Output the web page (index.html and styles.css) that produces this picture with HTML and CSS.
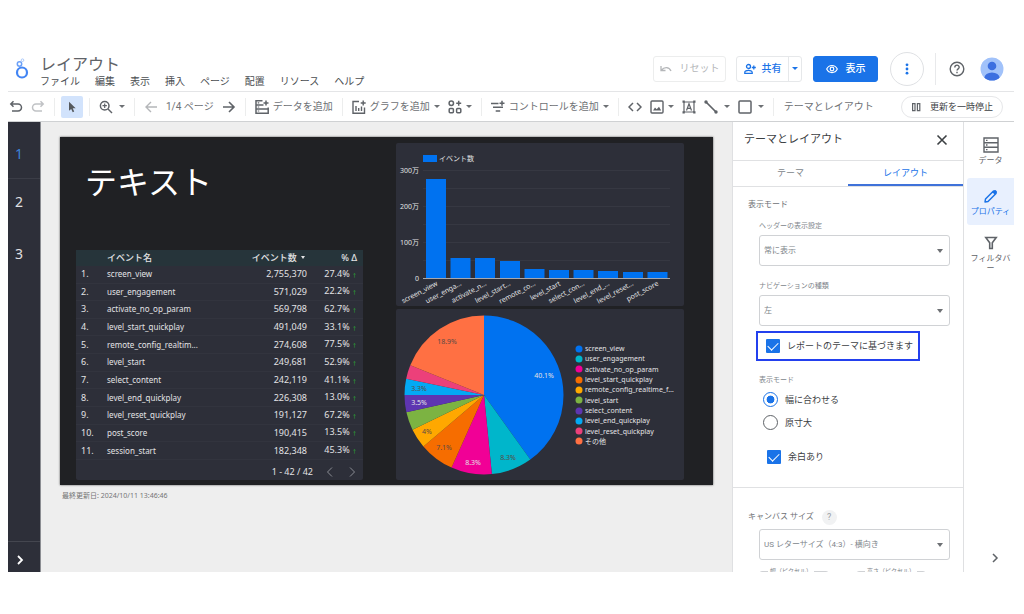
FILE: index.html
```html
<!DOCTYPE html>
<html lang="ja">
<head>
<meta charset="utf-8">
<title>レイアウト</title>
<link rel="stylesheet" href="styles.css">
</head>
<body>
<div class="app">
  <header class="header">
    <svg class="logo" viewBox="0 0 14 22"><circle cx="7" cy="14.500" r="5" fill="none" stroke="#4285f4" stroke-width="2.200"/><circle cx="4.500" cy="6" r="2.200" fill="none" stroke="#6ba0f7" stroke-width="1.500"/><circle cx="7.500" cy="2.200" r="1.300" fill="none" stroke="#a9c8fa"/></svg>
    <div class="heading">
      <h1 class="title">レイアウト</h1>
      <nav class="menu">
        <button>ファイル</button><button>編集</button><button>表示</button><button>挿入</button><button>ページ</button><button>配置</button><button>リソース</button><button>ヘルプ</button>
      </nav>
    </div>
    <div class="actions">
      <button class="btn btn-reset" disabled><svg class="ic12" viewBox="0 0 12 12"><path d="M1 3v4.500h4.500M1.500 7C4 4 9 3.500 11 8" fill="none" stroke="currentColor" stroke-width="1.300"/></svg>リセット</button>
      <div class="split">
        <button class="btn-share"><svg class="ic12" viewBox="0 0 12 12" fill="none" stroke="currentColor" stroke-width="1.300"><circle cx="4.500" cy="3.500" r="2"/><path d="M.8 10.300V9.500C.8 8 3 7.300 4.500 7.300S8.200 8 8.200 9.500v.8zM9.800 2.500v4M7.800 4.500h4"/></svg>共有</button>
        <button class="btn-more" aria-label="共有メニュー"><span class="caret"></span></button>
      </div>
      <button class="btn btn-view"><svg class="ic12" viewBox="0 0 12 12" fill="none" stroke="currentColor" stroke-width="1.200"><path d="M.7 6C3 1.300 9 1.300 11.300 6 9 10.700 3 10.700.7 6z"/><circle cx="6" cy="6" r="1.800"/></svg>表示</button>
      <button class="btn-round" aria-label="その他"><svg class="ic12" viewBox="0 0 12 12" fill="#1a73e8"><circle cx="6" cy="1.800" r="1.400"/><circle cx="6" cy="6" r="1.400"/><circle cx="6" cy="10.200" r="1.400"/></svg></button>
      <span class="rule"></span>
      <button class="btn-help" aria-label="ヘルプ"><svg viewBox="0 0 16 16" fill="none" stroke="#5f6368" stroke-width="1.400"><circle cx="8" cy="8" r="6.800"/><path d="M5.800 6.400c0-3 4.400-2.900 4.400-.2 0 1.600-2.200 1.700-2.200 3.400M8 10.700v1.500"/></svg></button>
      <button class="btn-avatar" aria-label="アカウント"><svg viewBox="0 0 24 24"><defs><clipPath id="face"><circle cx="12" cy="12" r="11.500"/></clipPath></defs><g clip-path="url(#face)"><circle cx="12" cy="12" r="12" fill="#a1c2fa"/><circle cx="12" cy="9" r="4.300" fill="#3c6fe0"/><ellipse cx="12" cy="21" rx="7.600" ry="5.600" fill="#3c6fe0"/></g></svg></button>
    </div>
  </header>

  <div class="toolbar">
    <div class="group group-first">
      <button aria-label="元に戻す"><svg class="ic" viewBox="0 0 14 14"><path d="M4.500 1.300 1.800 4l2.700 2.700M2 4h7a3.500 3.500 0 0 1 0 7H3" fill="none" stroke="#5f6368" stroke-width="1.500"/></svg></button>
      <button aria-label="やり直す"><svg class="ic" viewBox="0 0 14 14"><path d="M9.500 1.300 12.200 4 9.500 6.700M12 4H5a3.500 3.500 0 0 0 0 7h6" fill="none" stroke="#c0c2c5" stroke-width="1.500"/></svg></button>
    </div>
    <div class="group group-tight">
      <button class="pointer" aria-label="選択"><svg class="ic" viewBox="0 0 14 14"><path d="M4 1.800v9l2.200-1.900 1.500 3.300 1.500-.7-1.500-3.200h3z" fill="#55595e"/></svg></button>
    </div>
    <div class="group">
      <button class="wide" aria-label="ズーム"><svg class="ic" viewBox="0 0 14 14" fill="none" stroke="#5f6368" stroke-width="1.500"><circle cx="5.700" cy="5.700" r="4.300"/><path d="m9 9 4 4"/><path d="M5.700 3.500v4.400M3.500 5.700h4.400" stroke-width="1.200"/></svg><span class="caret"></span></button>
    </div>
    <div class="group">
      <button aria-label="前のページ"><svg class="ic" viewBox="0 0 14 14"><path d="M13 7H2M7 2 2 7l5 5" fill="none" stroke="#b4b6b9" stroke-width="1.400"/></svg></button>
      <span>1/4 ページ</span>
      <button aria-label="次のページ"><svg class="ic" viewBox="0 0 14 14"><path d="M1 7h11M7 2l5 5-5 5" fill="none" stroke="#5f6368" stroke-width="1.600"/></svg></button>
    </div>
    <div class="group">
      <button><svg class="ic" viewBox="0 0 14 14" fill="none" stroke="#5f6368" stroke-width="1.500"><path d="M7.500.8H1v12.400h12.200V9H1M1 5h7.500M13.200 9V7.500M11 .5v5M8.500 3h5"/><path d="M3.500 2.300v1.200M3.500 6.500v1M3.500 10.500v1"/></svg>データを追加</button>
    </div>
    <div class="group">
      <button><svg class="ic" viewBox="0 0 14 14" fill="none" stroke="#5f6368" stroke-width="1.400"><path d="M7 1.500H1v11.700h11.500V7.500M11.200.5v5M8.700 3h5M4 11V6M6.700 11V8M9.500 11V6.500"/></svg>グラフを追加<span class="caret"></span></button>
      <button aria-label="コミュニティ ビジュアリゼーション"><svg class="ic" viewBox="0 0 14 14" fill="none" stroke="#5f6368" stroke-width="1.500"><circle cx="3.300" cy="3.300" r="2.200"/><rect x="1.200" y="8.600" width="4.200" height="4.200" rx="1"/><rect x="8.600" y="8.600" width="4.200" height="4.200" rx="1"/><path d="M10.700.8v5M8.200 3.300h5"/></svg><span class="caret"></span></button>
    </div>
    <div class="group">
      <button><svg class="ic" viewBox="0 0 14 14" fill="none" stroke="#5f6368" stroke-width="1.500"><path d="M0 3.500h7.500M2 7.200h10M4.700 11h4.500M11 .8v5M8.500 3.300h5"/></svg>コントロールを追加<span class="caret"></span></button>
    </div>
    <div class="group">
      <button aria-label="URL の埋め込み"><svg class="ic" viewBox="0 0 14 14"><path d="M5 3 1 7l4 4M9 3l4 4-4 4" fill="none" stroke="#5f6368" stroke-width="1.500"/></svg></button>
      <button aria-label="画像"><svg class="ic" viewBox="0 0 14 14"><rect x="1" y="1" width="12" height="12" rx="1" fill="none" stroke="#5f6368" stroke-width="1.400"/><path d="m3 10.500 2-3 1.700 1.800L9 6.800l2.200 3.700z" fill="#5f6368"/></svg><span class="caret"></span></button>
      <button aria-label="テキスト"><svg class="ic" viewBox="0 0 14 14" fill="none" stroke="#5f6368" stroke-width="1.200"><path d="M2 2h10v10H2z"/><path d="M4.500 10.500 7 3.800l2.500 6.700M5.400 8.300h3.200"/><path d="M.5.5h2.300v2.300H.5zM11.200.5h2.300v2.300h-2.300zM.5 11.200h2.300v2.300H.5zM11.200 11.200h2.300v2.300h-2.300z" fill="#5f6368" stroke="none"/></svg></button>
      <button class="wide" aria-label="線"><svg class="ic" viewBox="0 0 14 14"><path d="m2 2 10 10" stroke="#5f6368" stroke-width="1.700"/><circle cx="2" cy="2" r="1.700" fill="#5f6368"/><circle cx="12" cy="12" r="1.700" fill="#5f6368"/></svg><span class="caret"></span></button>
      <button class="wide" aria-label="図形"><svg class="ic" viewBox="0 0 14 14"><rect x="1" y="1" width="12" height="12" rx="1" fill="none" stroke="#5f6368" stroke-width="1.500"/></svg><span class="caret"></span></button>
    </div>
    <div class="group group-last"><button>テーマとレイアウト</button></div>
    <button class="pause"><svg class="ic12" viewBox="0 0 12 12" fill="none" stroke="#5f6368" stroke-width="1.200"><path d="M2.600 2.600h2.400v7H2.600zM7.400 2.600h2.400v7H7.400z"/></svg>更新を一時停止</button>
  </div>

  <main class="main">
    <nav class="pages">
      <button class="page page-on">1</button>
      <button class="page">2</button>
      <button class="page">3</button>
      <button class="expand" aria-label="展開"><svg viewBox="0 0 10 10"><path d="m3 1 4 4-4 4" fill="none" stroke="#fff" stroke-width="1.800"/></svg></button>
    </nav>

    <section class="stage">
      <div class="canvas">
        <div class="left">
          <h2 class="text">テキスト</h2>
          <div class="card table-card">
            <table>
              <thead><tr><th class="n"></th><th class="name">イベント名</th><th class="num">イベント数 <span class="sort"></span></th><th class="pct">% Δ</th></tr></thead>
              <tbody>
                <tr><td>1.</td><td class="name">screen_view</td><td class="num">2,755,370</td><td class="pct">27.4% <i>↑</i></td></tr>
                <tr><td>2.</td><td class="name">user_engagement</td><td class="num">571,029</td><td class="pct">22.2% <i>↑</i></td></tr>
                <tr><td>3.</td><td class="name">activate_no_op_param</td><td class="num">569,798</td><td class="pct">62.7% <i>↑</i></td></tr>
                <tr><td>4.</td><td class="name">level_start_quickplay</td><td class="num">491,049</td><td class="pct">33.1% <i>↑</i></td></tr>
                <tr><td>5.</td><td class="name">remote_config_realtim...</td><td class="num">274,608</td><td class="pct">77.5% <i>↑</i></td></tr>
                <tr><td>6.</td><td class="name">level_start</td><td class="num">249,681</td><td class="pct">52.9% <i>↑</i></td></tr>
                <tr><td>7.</td><td class="name">select_content</td><td class="num">242,119</td><td class="pct">41.1% <i>↑</i></td></tr>
                <tr><td>8.</td><td class="name">level_end_quickplay</td><td class="num">226,308</td><td class="pct">13.0% <i>↑</i></td></tr>
                <tr><td>9.</td><td class="name">level_reset_quickplay</td><td class="num">191,127</td><td class="pct">67.2% <i>↑</i></td></tr>
                <tr><td>10.</td><td class="name">post_score</td><td class="num">190,415</td><td class="pct">13.5% <i>↑</i></td></tr>
                <tr><td>11.</td><td class="name">session_start</td><td class="num">182,348</td><td class="pct">45.3% <i>↑</i></td></tr>
              </tbody>
            </table>
            <div class="pager"><span>1 - 42 / 42</span>
              <button aria-label="前へ"><svg viewBox="0 0 10 10"><path d="M7 .5 2.500 5 7 9.500" fill="none" stroke="#8b8d94"/></svg></button>
              <button aria-label="次へ"><svg viewBox="0 0 10 10"><path d="M3 .5 7.500 5 3 9.500" fill="none" stroke="#8b8d94"/></svg></button>
            </div>
          </div>
        </div>
        <div class="right">
          <svg class="card chart" viewBox="0 0 288 163">
            <rect x="27" y="12" width="14" height="7" fill="#0072f0"/>
            <text x="43" y="18">イベント数</text>
            <path d="M27 27.500h247M27 45.500h247M27 63.500h247M27 81.500h247M27 99.500h247M27 117.500h247" stroke="#363842"/>
            <g class="end"><text x="23" y="30">300万</text><text x="23" y="66">200万</text><text x="23" y="102">100万</text><text x="23" y="138">0</text></g>
            <g fill="#0072f0">
              <rect x="30" y="36" width="20" height="99"/><rect x="54.500" y="115" width="20" height="20"/><rect x="79" y="115" width="20" height="20"/><rect x="104" y="118" width="20" height="17"/><rect x="128.500" y="126" width="20" height="9"/><rect x="153" y="127" width="20" height="8"/><rect x="177.500" y="127" width="20" height="8"/><rect x="202" y="128" width="20" height="7"/><rect x="227" y="129" width="20" height="6"/><rect x="251.500" y="129" width="20" height="6"/>
            </g>
            <path d="M27 135.500h247" stroke="#a6a7ad"/>
            <g class="end">
              <text transform="translate(42 142) rotate(-28)">screen_view</text>
              <text transform="translate(66 142) rotate(-28)">user_enga…</text>
              <text transform="translate(91 142) rotate(-28)">activate_n…</text>
              <text transform="translate(115 142) rotate(-28)">level_start…</text>
              <text transform="translate(140 142) rotate(-28)">remote_co…</text>
              <text transform="translate(165 142) rotate(-28)">level_start</text>
              <text transform="translate(189 142) rotate(-28)">select_con…</text>
              <text transform="translate(214 142) rotate(-28)">level_end_…</text>
              <text transform="translate(238 142) rotate(-28)">level_reset…</text>
              <text transform="translate(263 142) rotate(-28)">post_score</text>
            </g>
          </svg>
          <svg class="card chart" viewBox="0 0 288 171">
            <g transform="translate(88 86) rotate(-90)" fill="none" stroke-width="79.500">
              <circle r="39.750" pathLength="100" stroke="#0072f0" stroke-dasharray="40.100 100"/>
              <circle r="39.750" pathLength="100" stroke="#00b6cb" stroke-dasharray="8.300 100" stroke-dashoffset="-40.100"/>
              <circle r="39.750" pathLength="100" stroke="#f10096" stroke-dasharray="8.300 100" stroke-dashoffset="-48.400"/>
              <circle r="39.750" pathLength="100" stroke="#f66d00" stroke-dasharray="7.100 100" stroke-dashoffset="-56.700"/>
              <circle r="39.750" pathLength="100" stroke="#ffa800" stroke-dasharray="4 100" stroke-dashoffset="-63.800"/>
              <circle r="39.750" pathLength="100" stroke="#7cb342" stroke-dasharray="3.700 100" stroke-dashoffset="-67.800"/>
              <circle r="39.750" pathLength="100" stroke="#5e35b1" stroke-dasharray="3.500 100" stroke-dashoffset="-71.500"/>
              <circle r="39.750" pathLength="100" stroke="#03a9f4" stroke-dasharray="3.300 100" stroke-dashoffset="-75"/>
              <circle r="39.750" pathLength="100" stroke="#ec407a" stroke-dasharray="2.800 100" stroke-dashoffset="-78.300"/>
              <circle r="39.750" pathLength="100" stroke="#ff7043" stroke-dasharray="18.900 100" stroke-dashoffset="-81.100"/>
            </g>
            <g class="mid">
              <text x="148" y="69">40.1%</text><text class="dim" x="112" y="151">8.3%</text><text x="77" y="156">8.3%</text><text class="dim" x="48" y="141">7.1%</text><text class="dim" x="31" y="125">4%</text><text x="23" y="96">3.5%</text><text class="dim" x="23" y="82">3.3%</text><text class="dim" x="51" y="35">18.9%</text>
            </g>
            <circle cx="183" cy="40" r="3.500" fill="#0072f0"/><text x="189" y="42">screen_view</text>
            <circle cx="183" cy="50" r="3.500" fill="#00b6cb"/><text x="189" y="52">user_engagement</text>
            <circle cx="183" cy="60" r="3.500" fill="#f10096"/><text x="189" y="63">activate_no_op_param</text>
            <circle cx="183" cy="71" r="3.500" fill="#f66d00"/><text x="189" y="73">level_start_quickplay</text>
            <circle cx="183" cy="81" r="3.500" fill="#ffa800"/><text x="189" y="83">remote_config_realtime_f…</text>
            <circle cx="183" cy="91" r="3.500" fill="#7cb342"/><text x="189" y="94">level_start</text>
            <circle cx="183" cy="102" r="3.500" fill="#5e35b1"/><text x="189" y="104">select_content</text>
            <circle cx="183" cy="112" r="3.500" fill="#03a9f4"/><text x="189" y="114">level_end_quickplay</text>
            <circle cx="183" cy="122" r="3.500" fill="#ec407a"/><text x="189" y="125">level_reset_quickplay</text>
            <circle cx="183" cy="132" r="3.500" fill="#ff7043"/><text x="189" y="135">その他</text>
          </svg>
        </div>
      </div>
      <p class="updated">最終更新日: 2024/10/11 13:46:46</p>
    </section>

    <aside class="panel">
      <div class="panel-head"><h2>テーマとレイアウト</h2><button aria-label="閉じる"><svg viewBox="0 0 12 12"><path d="m1.500 1.500 9 9M10.500 1.500l-9 9" stroke="#3c4043" stroke-width="1.600"/></svg></button></div>
      <div class="tabs"><button class="tab">テーマ</button><button class="tab tab-on">レイアウト</button></div>
      <div class="view-mode">
        <h3>表示モード</h3>
        <div class="fields">
          <label for="head">ヘッダーの表示設定</label>
          <span class="select"><select id="head"><option>常に表示</option></select></span>
          <label for="navtype" class="next">ナビゲーションの種類</label>
          <span class="select"><select id="navtype"><option>左</option></select></span>
          <label class="check marked"><input type="checkbox" checked>レポートのテーマに基づきます</label>
          <span class="sub" id="fit">表示モード</span>
          <div role="radiogroup" aria-labelledby="fit" class="radios">
            <label class="radio"><input type="radio" name="fit" checked>幅に合わせる</label>
            <label class="radio"><input type="radio" name="fit">原寸大</label>
          </div>
          <label class="check"><input type="checkbox" checked>余白あり</label>
        </div>
      </div>
      <div class="canvas-size">
        <div class="size-head"><h3>キャンバス サイズ</h3><button class="hint" aria-label="キャンバス サイズのヘルプ">?</button></div>
        <div class="fields">
          <span class="select"><select aria-label="キャンバス サイズ"><option>US レターサイズ（4:3）- 横向き</option></select></span>
          <div class="dims"><fieldset><legend>幅（ピクセル）</legend></fieldset><fieldset><legend>高さ（ピクセル）</legend></fieldset></div>
        </div>
      </div>
    </aside>

    <nav class="rail">
      <button class="rail-item"><svg viewBox="0 0 16 16" fill="none" stroke="currentColor" stroke-width="1.400"><path d="M1 1h14v14H1zM1 5.700h14M1 10.300h14"/><path d="M3 3.400h1.500M3 8h1.500M3 12.600h1.500"/></svg>データ</button>
      <button class="rail-item rail-on"><svg viewBox="0 0 16 16"><path d="m2 14 .5-3 8-8 2.500 2.500-8 8z" fill="none" stroke="currentColor" stroke-width="1.500" stroke-linejoin="round"/><path d="m9.300 4.200 2-2c1-1 3.500 1.500 2.500 2.500l-2 2z" fill="currentColor"/></svg>プロパティ</button>
      <button class="rail-item rail-filter"><svg viewBox="0 0 16 16"><path d="M2.800 2.500h10.400L9.300 7.800v5.700H6.700V7.800z" fill="none" stroke="currentColor" stroke-width="1.600"/></svg>フィルタバー</button>
      <button class="collapse" aria-label="折りたたむ"><svg viewBox="0 0 10 10"><path d="m3 1 4 4-4 4" fill="none" stroke="#5f6368" stroke-width="1.500"/></svg></button>
    </nav>
  </main>
</div>
</body>
</html>
```

FILE: styles.css
```css
* { box-sizing: border-box; }
body { margin: 0; background: #fff; color: #5f6368; font-family: Roboto, "Noto Sans CJK JP", sans-serif; font-size: 10px; line-height: 14px; }
h1, h2, h3, p { margin: 0; font-weight: 400; }
button { display: flex; align-items: center; justify-content: center; margin: 0; padding: 0; border: 0; background: none; color: inherit; font: inherit; white-space: nowrap; }
svg { display: block; flex: none; }
.ic { width: 14px; height: 14px; }
.ic12 { width: 12px; height: 12px; }
.caret { flex: none; border: 3px solid transparent; border-top-color: currentColor; border-bottom: 0; }

.app { display: flex; flex-direction: column; height: 100vh; padding: 46px 10px 42px 8px; }

.header { display: flex; align-items: center; flex: none; height: 46px; padding: 0 10px 0 7px; border-bottom: 1px solid #e4e5e7; }
.logo { width: 14px; height: 22px; }
.heading { margin-left: 11px; padding-top: 6px; }
.title { font-size: 16px; line-height: 20px; color: #5f6368; }
.menu { display: flex; gap: 15px; color: #4a4d51; line-height: 14px; }
.actions { display: flex; align-items: center; margin-left: auto; }
.btn { height: 26px; gap: 8px; border: 1px solid #eceded; border-radius: 3px; }
.btn-reset { width: 73px; color: #b4b6b9; }
.split { display: flex; height: 26px; margin: 0 11px 0 10px; border: 1px solid #e6e8ea; border-radius: 3px; color: #1a73e8; }
.btn-share { width: 51px; gap: 6px; font-weight: 500; }
.btn-more { width: 13px; border-left: 1px solid #e6e8ea; }
.btn-view { width: 65px; border-color: #1a73e8; background: #1a73e8; color: #fff; font-weight: 500; }
.btn-round { width: 34px; height: 34px; margin: 0 11px 0 12px; border: 1px solid #dfe1e4; border-radius: 50%; }
.rule { height: 32px; border-left: 1px solid #e8e9eb; }
.btn-help { margin: 0 15px 0 13px; }
.btn-help svg { width: 16px; height: 16px; }
.btn-avatar svg { width: 24px; height: 24px; }

.toolbar { display: flex; align-items: center; flex: none; height: 30px; padding-right: 11px; border-bottom: 1px solid #cfd1d3; white-space: nowrap; color: #6d7074; }
.group { display: flex; align-items: center; gap: 8px; height: 18px; padding: 0 9px; border-right: 1px solid #eceded; }
.group button { gap: 4px; }
.group .wide { gap: 6px; }
.group-first { padding-left: 1px; }
.group-tight { padding: 0 6px; }
.group-last { border: 0; padding-left: 10px; }
.group .pointer { width: 22px; height: 22px; border-radius: 2px; background: #d2e3fc; }
.pause { margin-left: auto; height: 22px; padding: 0 9px 0 8px; gap: 8px; border: 1px solid #e6e7e9; border-radius: 11px; color: #3c4043; font-size: 9px; }

.main { display: flex; flex: 1; min-height: 0; }
.pages { display: flex; flex-direction: column; flex: none; width: 33px; padding-top: 8px; background: #2d2f39; border-right: 1px solid #8c8e93; color: #e0e0e3; font: 14px/20px "Noto Sans", sans-serif; }
.page { height: 52px; padding: 0 10px 6px 0; }
.page-on { height: 49px; padding-bottom: 0; border-bottom: 1px solid #3b3d47; color: #3d85d8; }
.expand { height: 31px; margin-top: auto; padding: 6px 9px 0 0; border-top: 1px solid #44464f; }
.expand svg, .collapse svg { width: 10px; height: 10px; }

.stage { flex: 1; min-width: 0; padding: 15px 19px 0; background: #eee; }
.canvas { display: grid; grid-template-columns: 287fr 288fr; column-gap: 33px; padding: 6px 29px 5px 16px; background: #202124; box-shadow: 0 0 2px #555; font-family: "Noto Sans", "Noto Sans CJK JP", sans-serif; color: #e3e3e5; }
.left, .right { display: flex; flex-direction: column; min-width: 0; }
.left { justify-content: space-between; }
.right { gap: 3px; }
.text { padding: 16px 0 0 9px; font-size: 32px; line-height: 46px; font-weight: 400; color: #fff; }
.card { background: #2d2f39; border-radius: 2px; }
.table-card { font-size: 9px; line-height: 12px; }
table { width: 100%; height: 210px; border-collapse: collapse; table-layout: fixed; }
th, td { padding: 0; text-align: left; font-weight: 400; white-space: nowrap; }
td { border-bottom: 1px solid #32343e; }
td.name { font-size: 8px; }
th { height: 16px; background: #26343a; font-weight: 500; }
th:first-child, td:first-child { width: 31px; padding-left: 5px; }
th.num, td.num { width: 68px; text-align: right; }
th.num { padding-right: 2px; }
th.pct, td.pct { width: 56px; padding-right: 6px; text-align: right; }
.pct i { color: #2c9a35; font-style: normal; font-weight: 700; font-size: 5px; }
.sort { display: inline-block; margin: 0 0 2px 2px; border: 2px solid transparent; border-top: 3px solid #e3e3e5; border-bottom: 0; }
.pager { display: flex; align-items: center; justify-content: flex-end; gap: 12px; height: 20px; padding: 4px 6px 0 0; }
.pager svg { width: 10px; height: 10px; }
.chart { width: 100%; height: auto; overflow: visible; font-size: 7px; }
.chart text { fill: #e3e3e5; }
.chart .end { text-anchor: end; }
.chart .mid { text-anchor: middle; }
.chart .dim { fill: #5a4a45; }
.updated { padding: 4px 2px; font: 7px/14px "Noto Sans", "Noto Sans CJK JP", sans-serif; color: #757575; }

.panel { flex: none; width: 232px; overflow: hidden; border: solid #dfe0e2; border-width: 0 1px; background: #fff; }
.panel-head { display: flex; align-items: center; justify-content: space-between; height: 39px; padding: 0 15px 2px 11px; border-bottom: 1px solid #e0e1e3; }
.panel-head h2 { font-size: 11px; color: #3c4043; }
.panel-head svg { width: 12px; height: 12px; }
.tabs { display: flex; height: 26px; border-bottom: 1px solid #e0e1e3; }
.tab { flex: 1; padding-bottom: 2px; font-size: 9px; color: #80868b; }
.tab-on { color: #1a73e8; box-shadow: inset 0 -2px #3f72d9; }
.view-mode { padding: 11px 13px 0 15px; height: 301px; border-bottom: 1px solid #e0e1e3; }
h3 { font-size: 8px; line-height: 14px; color: #6d7074; }
.fields { display: flex; flex-direction: column; align-items: flex-start; padding-left: 11px; font-size: 7px; line-height: 12px; color: #80868b; }
.view-mode .fields { padding-top: 8px; }
.select { display: flex; align-items: center; width: 100%; margin-top: 3px; position: relative; }
.select::after { content: ""; position: absolute; right: 7px; border: 3px solid transparent; border-top: 4px solid #6d7074; border-bottom: 0; pointer-events: none; }
select { appearance: none; width: 100%; height: 31px; margin: 0; padding: 0 16px 0 4px; border: 1px solid #d0d2d5; border-radius: 3px; background: #fff; color: #80868b; font: 8px/14px Roboto, "Noto Sans CJK JP", sans-serif; }
.next { margin-top: 14px; }
.check, .radio { display: flex; align-items: center; gap: 7px; font-size: 9px; line-height: 14px; color: #3c4043; }
.check { padding-left: 8px; }
.marked { align-self: stretch; height: 30px; margin: 5px 30px 0 -3px; border: 2px solid #2340ee; white-space: nowrap; }
input { appearance: none; flex: none; display: grid; place-items: center; margin: 0; }
.check input { width: 14px; height: 14px; border-radius: 1px; background: #1a73e8; }
.check input::after { content: ""; width: 5px; height: 9px; margin-bottom: 2px; border: solid #fff; border-width: 0 1px 1px 0; rotate: 45deg; }
.sub { margin-top: 13px; }
.radios { padding: 2px 0 16px 4px; }
.radio { height: 23px; }
.radio input { width: 15px; height: 15px; border: 1px solid #5f6368; border-radius: 50%; }
.radio input:checked { border-color: #1a73e8; background: radial-gradient(circle closest-side, #1a73e8 55%, #fff 65%); }
.canvas-size { padding: 21px 13px 0 15px; }
.size-head { display: flex; align-items: center; gap: 8px; height: 16px; }
.hint { width: 15px; height: 15px; border-radius: 50%; background: #f1f2f3; font-size: 9px; color: #9aa0a6; }
.canvas-size .select { margin-top: 4px; }
.dims { display: flex; gap: 27px; padding-top: 6px; }
fieldset { width: 70px; height: 31px; margin: 0; padding: 0 0 0 8px; border: 1px solid #d0d2d5; border-radius: 3px; }
legend { padding: 0 2px; font-size: 6px; line-height: 10px; white-space: nowrap; }

.rail { display: flex; flex-direction: column; flex: none; width: 50px; padding: 9px 0 0 3px; font-size: 8px; color: #5f6368; }
.rail-item { flex-direction: column; height: 47px; padding: 1px 0 8px; line-height: 10px; }
.rail-item svg { width: 16px; height: 16px; margin-bottom: 3px; }
.rail-on { padding: 6px 0 4px; border-radius: 3px 0 0 3px; background: #e8f0fe; color: #1a73e8; }
.rail-filter { height: auto; padding-top: 10px; white-space: normal; word-break: break-all; }
.collapse { margin: auto 0 9px 8px; }
```
